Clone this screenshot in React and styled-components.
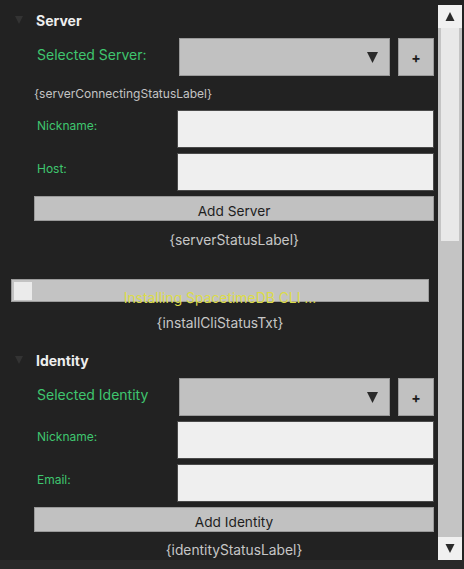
import React from "react";
import styled, { createGlobalStyle } from "styled-components";

const GlobalStyle = createGlobalStyle`
  html, body { margin: 0; padding: 0; background: #222222; }
  body { font-family: Inter, "Noto Sans", "Liberation Sans", sans-serif; }
  * { box-sizing: border-box; }
`;

const Page = styled.div`
  width: 464px;
  height: 569px;
  display: flex;
  flex-direction: column;
  background: #222222;
  overflow: hidden;
`;

const Main = styled.div`
  display: flex;
  height: 560px;
`;

const Content = styled.div`
  flex: 0 0 438px;
  display: flex;
  flex-direction: column;
  padding: 9px 4px 0 0;
`;

const BottomStrip = styled.div`
  height: 9px;
  background: #292929;
`;

const Header = styled.div`
  display: flex;
  align-items: center;
  height: 22px;
  padding-left: 15px;
  gap: 13px;
  margin-top: ${(p) => p.$mt || 0}px;
  color: #eeeeee;
  font-weight: 700;
  font-size: 14px;
`;

const Body = styled.div`
  display: flex;
  flex-direction: column;
  padding-left: 34px;
`;

const Row = styled.div`
  display: flex;
  align-items: center;
  height: 38px;
  margin-top: ${(p) => p.$mt || 0}px;
`;

const BigLabel = styled.div`
  width: 145px;
  padding-left: 3px;
  margin-bottom: 6px;
  color: #3fc66f;
  font-size: 14px;
`;

const FieldLabel = styled.div`
  width: 143px;
  padding-left: 3px;
  margin-bottom: 7px;
  color: #3fc66f;
  font-size: 12px;
`;

const Dropdown = styled.div`
  flex: 0 0 211px;
  height: 38px;
  background: #c1c1c1;
  border: 1px solid #9a9a9a;
  display: flex;
  align-items: center;
  justify-content: flex-end;
  padding-right: 11px;
`;

const PlusButton = styled.div`
  margin-left: 8px;
  width: 36px;
  height: 38px;
  background: #c1c1c1;
  border: 1px solid #9a9a9a;
  display: flex;
  align-items: center;
  justify-content: center;
  color: #1c1c1c;
  font-weight: 700;
  font-size: 14px;
`;

const Input = styled.div`
  flex: 1;
  height: 38px;
  background: #efefef;
  border: 1px solid #4a4a4a;
`;

const SmallStatus = styled.div`
  margin-top: ${(p) => p.$mt || 0}px;
  color: #c4c4c4;
  font-size: 12px;
  line-height: 14px;
`;

const Status = styled.div`
  margin: ${(p) => p.$mt || 0}px ${(p) => p.$mr || 0}px 0 ${(p) => p.$ml || 0}px;
  color: #c6c6c6;
  font-size: 13.8px;
  line-height: 16px;
  text-align: center;
`;

const Button = styled.div`
  margin-top: 5px;
  height: 25px;
  background: #c1c1c1;
  border: 1px solid #9a9a9a;
  color: #1e1e1e;
  font-size: 13.7px;
  display: flex;
  align-items: flex-end;
  justify-content: center;
  padding-bottom: 1px;
`;

const Progress = styled.div`
  position: relative;
  margin: 31px 5px 0 11px;
  height: 23px;
  background: #c3c3c3;
  border: 1px solid #9c9c9c;
  padding: 2px;
`;

const ProgressFill = styled.div`
  width: 18px;
  height: 18px;
  background: #ebebeb;
`;

const ProgressTitle = styled.span`
  position: absolute;
  left: 0;
  right: 0;
  top: 10px;
  text-align: center;
  color: #dcdc48;
  font-size: 13.9px;
  line-height: 16px;
`;

const Scrollbar = styled.div`
  margin-top: 5px;
  width: 24px;
  height: 555px;
  display: flex;
  flex-direction: column;
`;

const ScrollButton = styled.div`
  height: 23px;
  background: #f0f0f0;
  display: flex;
  align-items: center;
  justify-content: center;
`;

const Track = styled.div`
  flex: 1;
  background: #c4c4c4;
  padding: 0 3px;
`;

const Thumb = styled.div`
  height: 213px;
  background: #e8e8e8;
`;

const Tri = ({ down = true, size = 10, color = "#333", h }) => (
  <svg width={size} height={h || size} viewBox="0 0 10 10">
    <polygon points={down ? "0,0 10,0 5,10" : "0,10 10,10 5,0"} fill={color} />
  </svg>
);

export default function App() {
  return (
    <>
      <GlobalStyle />
      <Page>
        <Main>
          <Content>
            <Header>
              <Tri size={8} color="#333333" />
              Server
            </Header>
            <Body>
              <Row $mt={7}>
                <BigLabel>Selected Server:</BigLabel>
                <Dropdown>
                  <Tri size={11} color="#2a2a2a" />
                </Dropdown>
                <PlusButton>+</PlusButton>
              </Row>
              <SmallStatus $mt={11}>{"{serverConnectingStatusLabel}"}</SmallStatus>
              <Row $mt={9}>
                <FieldLabel>Nickname:</FieldLabel>
                <Input />
              </Row>
              <Row $mt={5}>
                <FieldLabel>Host:</FieldLabel>
                <Input />
              </Row>
              <Button>Add Server</Button>
              <Status $mt={11}>{"{serverStatusLabel}"}</Status>
            </Body>
            <Progress>
              <ProgressFill />
              <ProgressTitle>Installing SpacetimeDB CLI ...</ProgressTitle>
            </Progress>
            <Status $mt={13} $ml={11} $mr={5}>{"{installCliStatusTxt}"}</Status>
            <Header $mt={18}>
              <Tri size={8} color="#333333" />
              Identity
            </Header>
            <Body>
              <Row $mt={7}>
                <BigLabel>Selected Identity</BigLabel>
                <Dropdown>
                  <Tri size={11} color="#2a2a2a" />
                </Dropdown>
                <PlusButton>+</PlusButton>
              </Row>
              <Row $mt={5}>
                <FieldLabel>Nickname:</FieldLabel>
                <Input />
              </Row>
              <Row $mt={5}>
                <FieldLabel>Email:</FieldLabel>
                <Input />
              </Row>
              <Button>Add Identity</Button>
              <Status $mt={10}>{"{identityStatusLabel}"}</Status>
            </Body>
          </Content>
          <Scrollbar>
            <ScrollButton>
              <Tri down={false} size={10} h={9} color="#2a2a2a" />
            </ScrollButton>
            <Track>
              <Thumb />
            </Track>
            <ScrollButton>
              <Tri size={10} h={9} color="#2a2a2a" />
            </ScrollButton>
          </Scrollbar>
        </Main>
        <BottomStrip />
      </Page>
    </>
  );
}
